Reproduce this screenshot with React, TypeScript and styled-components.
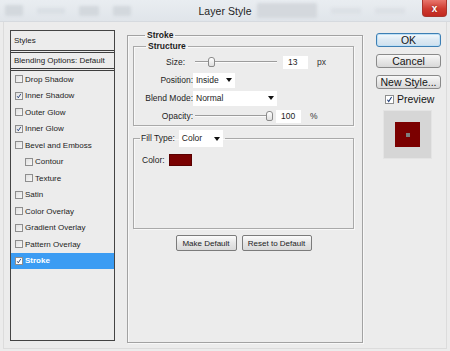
import React from "react";
import styled, { createGlobalStyle } from "styled-components";

const Global = createGlobalStyle`
  html, body { margin: 0; padding: 0; background: #ececec; }
  body { font-family: "Liberation Sans", Arial, sans-serif; color: #1c1c1c; }
  * { box-sizing: border-box; }
`;

const Window = styled.div`
  width: 450px;
  height: 351px;
  display: flex;
  flex-direction: column;
  background: #ececec;
  overflow: hidden;
`;

const TitleBar = styled.div`
  height: 22px;
  display: grid;
  grid-template-columns: 1fr auto 1fr;
  align-items: center;
  background: linear-gradient(#e9edf1, #e0e5ea);
  border-bottom: 1px solid #d6dadf;
`;

const GhostGroup = styled.div`
  display: flex;
  align-items: center;
  height: 100%;
  gap: 14px;
  padding-left: 5px;
  justify-content: flex-start;
`;

const Ghost = styled.div<{ $w: number; $h: number; $c?: string }>`
  width: ${(p) => p.$w}px;
  height: ${(p) => p.$h}px;
  background: ${(p) => p.$c || "#d3d8dd"};
  border-radius: 2px;
  filter: blur(1.6px);
  flex: none;
`;

const Title = styled.div`
  font-size: 10.5px;
  color: #1e1e1e;
  letter-spacing: 0.05px;
  padding-top: 1px;
`;

const Close = styled.div`
  margin-left: auto;
  margin-right: 3px;
  align-self: start;
  width: 25px;
  height: 17px;
  border-radius: 0 0 4px 4px;
  background: linear-gradient(#e8766c, #cf3b30 55%, #c1281f);
  border: 1px solid #a8352c;
  border-top: none;
  color: #fff;
  font-size: 10px;
  font-weight: bold;
  display: flex;
  align-items: center;
  justify-content: center;
  text-shadow: 0 0 2px #7a1a14;
`;

const Body = styled.div`
  flex: 1;
  display: flex;
  align-items: flex-start;
  margin: 0 3px 2px 3px;
  border: 1px solid #dcdcdc;
  border-top: none;
  padding: 8px 0 0 6px;
`;

/* ---------- left style list ---------- */

const StyleList = styled.div`
  width: 105px;
  height: 311px;
  border: 1px solid #444;
  display: flex;
  flex-direction: column;
  font-size: 8px;
`;

const ListHeader = styled.div<{ $h: number }>`
  height: ${(p) => p.$h}px;
  display: flex;
  align-items: center;
  padding-left: 3px;
  border-bottom: 3px double #3e3e3e;
  color: #1c1c1c;
`;

const ListRow = styled.div<{ $indent?: boolean; $selected?: boolean }>`
  height: 16.5px;
  display: flex;
  align-items: center;
  gap: 2px;
  padding-left: ${(p) => (p.$indent ? 14 : 4)}px;
  background: ${(p) => (p.$selected ? "#3b9cf3" : "transparent")};
  color: ${(p) => (p.$selected ? "#fff" : "#1c1c1c")};
  font-weight: ${(p) => (p.$selected ? "bold" : "normal")};
`;

const Box = styled.div<{ $size: number; $white?: boolean }>`
  width: ${(p) => p.$size}px;
  height: ${(p) => p.$size}px;
  border: 1px solid #8e8e8e;
  background: ${(p) =>
    p.$white ? "#fff" : "linear-gradient(135deg, #e0e0e0, #f7f7f7)"};
  display: flex;
  align-items: center;
  justify-content: center;
  flex: none;
`;

const Check: React.FC<{ size: number; checked?: boolean; white?: boolean }> = ({
  size,
  checked,
  white,
}) => (
  <Box $size={size} $white={white}>
    {checked && (
      <svg width={size - 2} height={size - 2} viewBox="0 0 8 8">
        <polyline
          points="1.6,4.3 3.1,6.4 6.4,1.2"
          fill="none"
          stroke="#1d3a78"
          strokeWidth="1.2"
        />
      </svg>
    )}
  </Box>
);

/* ---------- main panel ---------- */

const Group = styled.fieldset<{ $h: number; $w: number; $mt?: number }>`
  margin: ${(p) => p.$mt || 0}px 0 0 0;
  padding: 0;
  width: ${(p) => p.$w}px;
  height: ${(p) => p.$h}px;
  border: 1px solid #a9a9a9;
  box-shadow: inset 1px 1px 0 #f8f8f8, 1px 1px 0 #f8f8f8;
  display: flex;
  flex-direction: column;
  min-inline-size: 0;
`;

const MainGroup = styled(Group)`
  margin-left: 12px;
  padding: 0 8px 0 5px;
  border-color: #a2a2a2;
`;

const Legend = styled.legend<{ $ml: number }>`
  margin-left: ${(p) => p.$ml}px;
  padding: 0 2px;
  font-size: 8.5px;
  font-weight: bold;
  line-height: 10px;
  color: #1c1c1c;
`;

const FillLegend = styled.legend`
  margin-left: 6px;
  padding: 0 2px 0 1px;
  display: flex;
  align-items: center;
  gap: 4px;
  font-size: 8.5px;
  line-height: 17px;
  color: #1c1c1c;
`;

const Rows = styled.div`
  padding-top: 2px;
  display: flex;
  flex-direction: column;
`;

const Row = styled.div`
  height: 18px;
  display: flex;
  align-items: center;
  font-size: 8.5px;
`;

const Label = styled.div<{ $gap?: number }>`
  width: 59px;
  text-align: right;
  padding-right: ${(p) => p.$gap || 0}px;
  color: #1c1c1c;
  flex: none;
`;

const Slider = styled.div<{ $w: number; $ml?: number }>`
  position: relative;
  width: ${(p) => p.$w}px;
  margin-left: ${(p) => p.$ml || 0}px;
  height: 10px;
  flex: none;
  &::before {
    content: "";
    position: absolute;
    left: 0;
    right: 0;
    top: 4px;
    height: 1px;
    background: #9c9c9c;
    box-shadow: 0 1px 0 #fafafa;
  }
`;

const Thumb = styled.div`
  position: absolute;
  top: 0;
  width: 7px;
  height: 10px;
  margin-left: -3.5px;
  border: 1px solid #8a8a8a;
  border-radius: 3px 3px 2px 2px;
  background: linear-gradient(#ffffff, #dedede);
`;

const Field = styled.div<{ $ml?: number }>`
  width: 25px;
  height: 13px;
  background: #fff;
  margin-left: ${(p) => p.$ml || 0}px;
  padding-left: 5px;
  display: flex;
  align-items: center;
  font-size: 8.5px;
  flex: none;
`;

const Unit = styled.div`
  margin-left: 9px;
  font-size: 8.5px;
  color: #333;
`;

const Select = styled.div<{ $w: number; $h?: number }>`
  width: ${(p) => p.$w}px;
  height: ${(p) => p.$h || 15}px;
  background: #fff;
  display: flex;
  align-items: center;
  justify-content: space-between;
  padding: 0 3px 0 3px;
  font-size: 8.5px;
  font-weight: normal;
  color: #1c1c1c;
  flex: none;
  &::after {
    content: "";
    border-left: 3px solid transparent;
    border-right: 3px solid transparent;
    border-top: 4px solid #111;
  }
`;

const ColorRow = styled.div`
  margin-top: 7px;
  padding-left: 8px;
  height: 12px;
  display: flex;
  align-items: center;
  gap: 4px;
  font-size: 8.5px;
`;

const Swatch = styled.div<{ $c: string }>`
  width: 23px;
  height: 12px;
  background: ${(p) => p.$c};
  border: 1px solid #5a0000;
`;

const ButtonRow = styled.div`
  margin-top: 6px;
  display: flex;
  justify-content: center;
  gap: 5px;
`;

const SmallButton = styled.div<{ $w: number }>`
  width: ${(p) => p.$w}px;
  height: 16px;
  border: 1px solid #7b7b7b;
  border-radius: 2px;
  background: linear-gradient(#fbfbfb, #e6e6e6 50%, #d9d9d9);
  display: flex;
  align-items: center;
  justify-content: center;
  font-size: 8px;
  color: #1c1c1c;
`;

/* ---------- right column ---------- */

const Side = styled.div`
  margin-left: 13px;
  width: 65px;
  padding-top: 3px;
  display: flex;
  flex-direction: column;
`;

const DialogButton = styled.div<{ $default?: boolean; $mt?: number }>`
  margin-top: ${(p) => p.$mt || 0}px;
  height: 14px;
  border: 1px solid ${(p) => (p.$default ? "#3d7fb4" : "#8a8a8a")};
  border-radius: 3px;
  background: ${(p) =>
    p.$default
      ? "linear-gradient(#f4f9fd, #dce9f3 50%, #cfe0ee)"
      : "linear-gradient(#f8f8f8, #e7e7e7 50%, #d8d8d8)"};
  box-shadow: ${(p) => (p.$default ? "inset 0 0 0 1px #bfe0f5" : "none")};
  display: flex;
  align-items: center;
  justify-content: center;
  font-size: 10.5px;
  color: #151515;
  white-space: nowrap;
`;

const PreviewRow = styled.div`
  margin-top: 5px;
  padding-left: 9px;
  height: 10px;
  display: flex;
  align-items: center;
  gap: 3px;
  font-size: 10.5px;
  color: #151515;
`;

const PreviewBox = styled.div`
  margin: 6px 0 0 7px;
  width: 49px;
  height: 49px;
  background: #d6d6d6;
  border: 1px solid #e4e4e4;
  display: flex;
  align-items: center;
  justify-content: center;
`;

const PreviewSquare = styled.div`
  width: 25px;
  height: 25px;
  background: #7b0000;
  display: flex;
  align-items: center;
  justify-content: center;
  &::after {
    content: "";
    width: 4px;
    height: 4px;
    background: #7e7e7e;
  }
`;

const styles: { name: string; checked?: boolean; indent?: boolean; selected?: boolean }[] = [
  { name: "Drop Shadow" },
  { name: "Inner Shadow", checked: true },
  { name: "Outer Glow" },
  { name: "Inner Glow", checked: true },
  { name: "Bevel and Emboss" },
  { name: "Contour", indent: true },
  { name: "Texture", indent: true },
  { name: "Satin" },
  { name: "Color Overlay" },
  { name: "Gradient Overlay" },
  { name: "Pattern Overlay" },
  { name: "Stroke", checked: true, selected: true },
];

export default function App() {
  return (
    <>
      <Global />
      <Window>
        <TitleBar>
          <GhostGroup>
            <Ghost $w={18} $h={11} />
            <Ghost $w={28} $h={6} $c="#dadfe4" />
            <Ghost $w={20} $h={10} />
            <Ghost $w={18} $h={10} />
          </GhostGroup>
          <Title>Layer Style</Title>
          <GhostGroup>
            <Ghost $w={60} $h={15} $c="#d4d8dd" />
            <Ghost $w={30} $h={6} $c="#dce0e5" />
            <Ghost $w={30} $h={6} $c="#dce0e5" />
            <Close>x</Close>
          </GhostGroup>
        </TitleBar>
        <Body>
          <StyleList>
            <ListHeader $h={22}>Styles</ListHeader>
            <ListHeader $h={18}>Blending Options: Default</ListHeader>
            {styles.map((s) => (
              <ListRow key={s.name} $indent={s.indent} $selected={s.selected}>
                <Check size={8} checked={s.checked} white={s.selected} />
                {s.name}
              </ListRow>
            ))}
          </StyleList>

          <MainGroup $w={236} $h={313}>
            <Legend $ml={12}>Stroke</Legend>
            <Group $w={221} $h={85} $mt={1}>
              <Legend $ml={12}>Structure</Legend>
              <Rows>
                <Row>
                  <Label $gap={8}>Size:</Label>
                  <Slider $w={82} $ml={2}>
                    <Thumb style={{ left: 16 }} />
                  </Slider>
                  <Field $ml={6}>13</Field>
                  <Unit>px</Unit>
                </Row>
                <Row>
                  <Label>Position:</Label>
                  <Select $w={42}>Inside</Select>
                </Row>
                <Row>
                  <Label>Blend Mode:</Label>
                  <Select $w={84}>Normal</Select>
                </Row>
                <Row>
                  <Label>Opacity:</Label>
                  <Slider $w={74} $ml={2}>
                    <Thumb style={{ left: 74 }} />
                  </Slider>
                  <Field $ml={7}>100</Field>
                  <Unit>%</Unit>
                </Row>
              </Rows>
            </Group>
            <Group $w={221} $h={99} $mt={4}>
              <FillLegend>
                Fill Type:
                <Select $w={44} $h={17}>
                  Color
                </Select>
              </FillLegend>
              <ColorRow>
                Color:
                <Swatch $c="#7a0101" />
              </ColorRow>
            </Group>
            <ButtonRow>
              <SmallButton $w={61}>Make Default</SmallButton>
              <SmallButton $w={70}>Reset to Default</SmallButton>
            </ButtonRow>
          </MainGroup>

          <Side>
            <DialogButton $default>OK</DialogButton>
            <DialogButton $mt={7}>Cancel</DialogButton>
            <DialogButton $mt={7}>New Style...</DialogButton>
            <PreviewRow>
              <Check size={9} checked white />
              Preview
            </PreviewRow>
            <PreviewBox>
              <PreviewSquare />
            </PreviewBox>
          </Side>
        </Body>
      </Window>
    </>
  );
}
